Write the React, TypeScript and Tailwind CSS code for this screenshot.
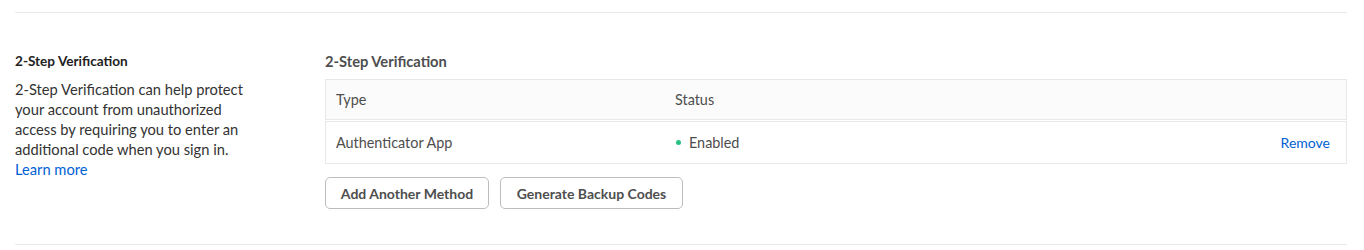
import React from "react";

export default function App() {
  return (
    <div
      className="w-[1364px] h-[250px] bg-white pt-[12px] pl-[15px] pr-[17px] text-[13.6px] text-[#222]"
      style={{ fontFamily: "Lato, 'Liberation Sans', sans-serif" }}
    >
      <div className="border-t border-b border-[#e8e8e8] flex pt-[38px] pb-[35px]">
        <div className="w-[310px] shrink-0">
          <div className="font-bold leading-[20px] text-[13.6px] text-[#222]">2-Step Verification</div>
          <p className="mt-[8px] w-[236px] leading-[20px] text-[14.7px] text-[#333]">
            2-Step Verification can help protect your account from unauthorized access by requiring you to enter an additional code when you sign in.
            <br />
            <a href="#" className="text-[#0061d5]">Learn more</a>
          </p>
        </div>
        <div className="flex-1">
          <div className="font-bold leading-[20px] text-[14.7px] text-[#4e4e4e]">2-Step Verification</div>
          <div className="mt-[8px] text-[14.4px]">
            <div className="h-[41px] border border-[#e8e8e8] bg-[#fbfbfb] flex items-center text-[#4e4e4e]">
              <div className="w-[349px] pl-[10px]">Type</div>
              <div>Status</div>
            </div>
            <div className="mt-[1px] h-[43px] border border-[#e8e8e8] flex items-center text-[#4e4e4e]">
              <div className="w-[349px] pl-[10px]">Authenticator App</div>
              <div className="flex items-center flex-1">
                <span className="w-[5px] h-[5px] rounded-full bg-[#26c281] ml-[1px] mr-[8px]" />
                <span>Enabled</span>
              </div>
              <a href="#" className="pr-[16px] text-[14px] text-[#0061d5]">Remove</a>
            </div>
          </div>
          <div className="mt-[13px] flex gap-[11px]">
            <button className="h-[32px] w-[164px] rounded-[5px] border border-[#bcbcbc] bg-white font-bold text-[#4e4e4e] text-[14px]">
              Add Another Method
            </button>
            <button className="h-[32px] w-[183px] rounded-[5px] border border-[#bcbcbc] bg-white font-bold text-[#4e4e4e] text-[14px]">
              Generate Backup Codes
            </button>
          </div>
        </div>
      </div>
    </div>
  );
}
